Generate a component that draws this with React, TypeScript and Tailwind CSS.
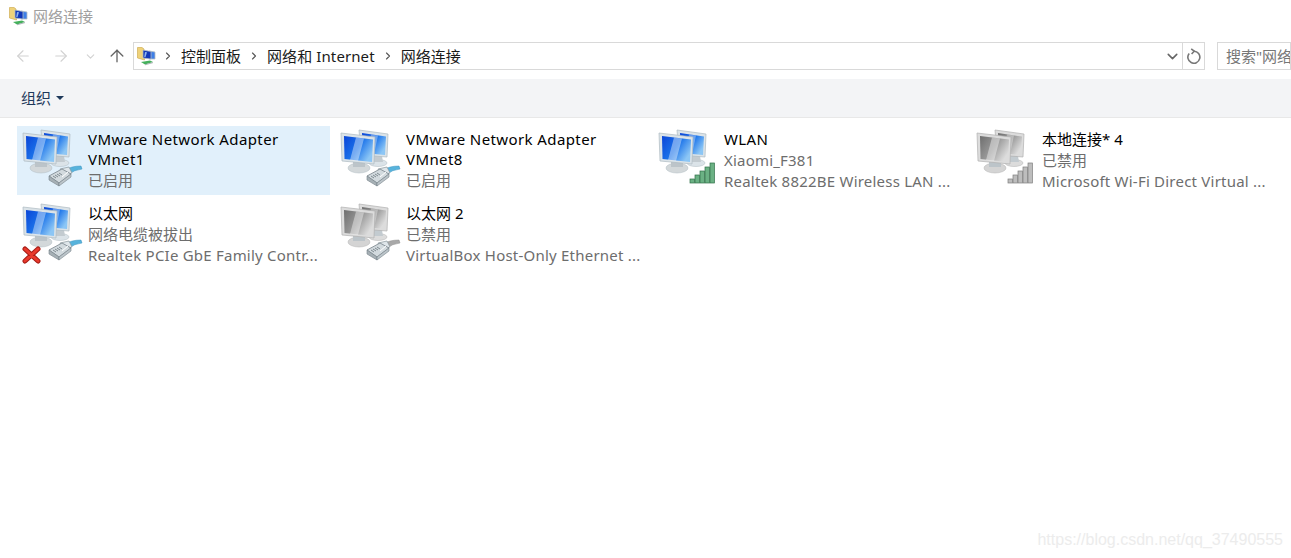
import { ArrowLeft, ArrowRight, ArrowUp, ChevronDown, ChevronRight } from "lucide-react";

const FONT = "font-['Noto_Sans','Noto_Sans_CJK_SC',sans-serif]";

type Badge = "plug" | "signal" | "signalOff";

const Plug = ({ gray }: { gray?: boolean }) => (
  <g>
    <path d="M47 44 Q52 40 62 40 L63 43 Q55 44 50 48 Z" fill={gray ? "#a8a8a8" : "#57b3dc"} stroke={gray ? "#8c8c8c" : "#3b93bf"} strokeWidth="0.5" />
    <polygon points="41,43 50,41 53,47 44,50" fill="#dfe6ea" stroke="#8a969c" strokeWidth="0.7" />
    <polygon points="30,50 43,43 52,48 40,57" fill="#d2dade" stroke="#77838a" strokeWidth="0.8" />
    <polygon points="30,50 40,57 40,60 30,54" fill="#a6b0b5" stroke="#77838a" strokeWidth="0.6" />
    <polygon points="40,57 52,48 52,51 40,60" fill="#bdc6cb" stroke="#77838a" strokeWidth="0.6" />
    <path d="M34 50 L37 52 M36 49 L39 51 M38 48 L41 50 M40 47 L43 49" stroke="#6a767c" strokeWidth="0.8" />
    <path d="M43 51 L49 46" stroke="#ffffff" strokeWidth="1" />
  </g>
);

const Signal = ({ gray }: { gray?: boolean }) => {
  const fill = gray ? "#bdbdbd" : "#6bb184";
  const edge = gray ? "#7e7e7e" : "#2f6f47";
  const bars = [
    { x: 35, y: 53, h: 4 },
    { x: 40, y: 49, h: 8 },
    { x: 45, y: 45, h: 12 },
    { x: 50, y: 41, h: 16 },
    { x: 55, y: 37, h: 20 },
  ];
  return (
    <g>
      {bars.map((b) => (
        <rect key={b.x} x={b.x} y={b.y} width="4.4" height={b.h} fill={fill} stroke={edge} strokeWidth="0.7" />
      ))}
    </g>
  );
};

const NetworkIcon = ({ gray, badge, unplugged }: { gray?: boolean; badge: Badge; unplugged?: boolean }) => {
  const frame = gray ? "#dcdcdc" : "#dbe3e8";
  const edge = gray ? "#b0b0b0" : "#aebac1";
  const screen = gray ? "url(#screenGray)" : "url(#screenBlue)";
  return (
    <svg width="66" height="66" viewBox="0 0 66 66" className="shrink-0">
      <defs>
        <linearGradient id="screenBlue" x1="0" y1="0" x2="1" y2="0.6">
          <stop offset="0" stopColor="#0a45d8" />
          <stop offset="0.55" stopColor="#1c74ea" />
          <stop offset="1" stopColor="#8cc6f5" />
        </linearGradient>
        <linearGradient id="screenGray" x1="0" y1="0" x2="1" y2="0.6">
          <stop offset="0" stopColor="#6e6e6e" />
          <stop offset="0.55" stopColor="#9a9a9a" />
          <stop offset="1" stopColor="#dcdcdc" />
        </linearGradient>
      </defs>
      {/* back monitor */}
      <ellipse cx="41" cy="37" rx="9" ry="3.5" fill={frame} stroke={edge} strokeWidth="0.5" />
      <polygon points="36,29 45,30 46,36 36,36" fill="#c3cbd0" />
      <polygon points="22,4 51,8 50,31 24,29" fill={frame} stroke={edge} strokeWidth="0.7" />
      <polygon points="25,7 49,10.5 48,29 26,27" fill={screen} />
      <polygon points="34,8.5 41,9.5 37,28 30,27" fill="#ffffff" fillOpacity="0.35" />
      {/* front monitor */}
      <ellipse cx="22" cy="42" rx="11" ry="5" fill={gray ? "#d4d4d4" : "#d3d8da"} stroke={edge} strokeWidth="0.5" />
      <polygon points="16,34 28,35 28,41 16,41" fill="#bcc4c9" />
      <polygon points="4,7 38,11 37,38 5,35" fill={frame} stroke={edge} strokeWidth="0.7" />
      <polygon points="7,10 36,13.5 35,36 7.5,33" fill={screen} />
      <polygon points="19,11.5 27,12.5 21,35 13,34" fill="#ffffff" fillOpacity="0.4" />
      {badge === "plug" && <Plug gray={gray} />}
      {badge !== "plug" && <Signal gray={badge === "signalOff"} />}
      {unplugged && (
        <g>
          <path d="M6 49 L19 61 M19 49 L6 61" stroke="#a51b14" strokeWidth="5" strokeLinecap="round" />
          <path d="M6 49 L19 61 M19 49 L6 61" stroke="#e8392c" strokeWidth="3" strokeLinecap="round" />
        </g>
      )}
    </svg>
  );
};

const FolderIcon = () => (
  <svg width="19" height="19" viewBox="0 0 19 19" className="shrink-0">
    <path d="M0.5 0.5 L5 0.5 L7 2 L7.5 13 L0.5 11 Z" fill="#efd27a" stroke="#c9a443" strokeWidth="0.6" />
    <polygon points="12,4 18,5 18,12 12,12" fill="#3f7fe6" stroke="#b4bec4" strokeWidth="0.8" />
    <polygon points="6,3 14,4.5 14,12 6,11" fill="#1238b8" stroke="#b4bec4" strokeWidth="0.8" />
    <polygon points="8,5 10,5.3 8.5,10 7.2,10" fill="#8fb4ee" />
    <path d="M4 15 L13 13.5 L16 15 L8 17.5 Z" fill="#45b05c" />
    <path d="M8 17.8 L16 15.6" stroke="#9aa3a8" strokeWidth="0.8" />
  </svg>
);

const RefreshIcon = () => (
  <svg width="16" height="16" viewBox="0 0 16 16" fill="none" stroke="#777" strokeWidth="1.6">
    <path d="M8 3.2 A6 6 0 1 1 3.2 5.4" />
    <path d="M5.2 0.8 L8.2 3.2 L5.6 6" />
  </svg>
);

const connections: { name: string[]; latin?: boolean; status: string; device: string; gray?: boolean; badge: Badge; unplugged?: boolean; selected?: boolean }[] = [
  { name: ["VMware Network Adapter", "VMnet1"], latin: true, status: "已启用", device: "", badge: "plug", selected: true },
  { name: ["VMware Network Adapter", "VMnet8"], latin: true, status: "已启用", device: "", badge: "plug" },
  { name: ["WLAN"], latin: true, status: "Xiaomi_F381", device: "Realtek 8822BE Wireless LAN ...", badge: "signal" },
  { name: ["本地连接* 4"], status: "已禁用", device: "Microsoft Wi-Fi Direct Virtual ...", gray: true, badge: "signalOff" },
  { name: ["以太网"], status: "网络电缆被拔出", device: "Realtek PCIe GbE Family Contr...", badge: "plug", unplugged: true },
  { name: ["以太网 2"], status: "已禁用", device: "VirtualBox Host-Only Ethernet ...", gray: true, badge: "plug" },
];

const Crumb = ({ label, wide }: { label: string; wide?: boolean }) => (
  <>
    <ChevronRight size={12} strokeWidth={2.2} className="shrink-0 text-[#555]" />
    <span className={`pb-px text-[15px] leading-5 text-[#1a1a1a] ${wide ? "tracking-[0.1px]" : ""}`}>{label}</span>
  </>
);

export default function App() {
  return (
    <div className={`relative h-[558px] w-[1291px] overflow-hidden bg-white ${FONT}`}>
      {/* --- Title bar --- */}
      <div className="flex h-[33px] items-center gap-[5px] pl-[9px]">
        <FolderIcon />
        <span className="text-[15px] text-[#a0a0a0]">网络连接</span>
      </div>

      {/* --- Address row --- */}
      <div className="flex h-[46px] items-center">
        <div className="flex w-[133px] items-center pl-[14px] text-[#d2d2d2]">
          <ArrowLeft size={18} strokeWidth={1.5} />
          <ArrowRight size={18} strokeWidth={1.5} className="ml-[20px]" />
          <ChevronDown size={13} strokeWidth={2} className="ml-[14px]" />
          <ArrowUp size={20} strokeWidth={1.6} className="ml-[10px] text-[#666]" />
        </div>
        <div className="flex h-7 w-[1050px] items-center border border-[#d9d9d9] pl-[3px] pr-[1px]">
          <FolderIcon />
          <div className="ml-[6px] flex items-center gap-[7px]">
            <Crumb label="控制面板" />
            <Crumb label="网络和 Internet" wide />
            <Crumb label="网络连接" />
          </div>
          <ChevronDown size={17} strokeWidth={2.2} className="ml-auto text-[#666]" />
        </div>
        <div className="flex h-7 w-[22px] items-center justify-center border border-l-0 border-[#d9d9d9]">
          <RefreshIcon />
        </div>
        <div className="ml-3 flex h-7 flex-1 items-center overflow-hidden whitespace-nowrap border border-[#d9d9d9] pl-[8px] text-[15px] text-[#777]">
          搜索"网络连接"
        </div>
      </div>

      {/* --- Toolbar --- */}
      <div className="flex h-[39px] items-center border-b border-[#e8e8e8] bg-[#f3f4f6] pl-[21px]">
        <span className="text-[15px] text-[#1e395b]">组织</span>
        <span className="ml-[5px] h-0 w-0 border-x-[4px] border-t-[4px] border-x-transparent border-t-[#1e395b]" />
      </div>

      {/* --- Connections --- */}
      <div className="grid grid-cols-[repeat(4,318px)] pl-[17px] pt-2">
        {connections.map((c, i) => (
          <div
            key={c.name.join() + i}
            className={`flex ${i < 4 ? "h-[69px]" : "h-[74px] pt-[5px]"} w-[313px] ${c.selected ? "bg-[#e1f0fb]" : ""}`}
          >
            <div className="ml-[2px]">
              <NetworkIcon gray={c.gray} badge={c.badge} unplugged={c.unplugged} />
            </div>
            <div className="ml-[3px] min-w-0 pt-[3px] text-[15px] leading-[21px] whitespace-nowrap">
              {c.name.map((line, n) => (
                <div
                  key={line}
                  className={`text-black ${c.latin ? "tracking-[0.4px]" : ""} ${n === 0 && c.name.length > 1 ? "leading-[20px]" : ""}`}
                >
                  {line}
                </div>
              ))}
              <div className={`text-[#6d6d6d] ${c.name[0] === "WLAN" ? "tracking-[0.2px]" : ""}`}>{c.status}</div>
              {c.device && <div className="text-[#6d6d6d] tracking-[0.22px]">{c.device}</div>}
            </div>
          </div>
        ))}
      </div>

      {/* --- Watermark --- */}
      <div className="absolute bottom-2 right-[8px] font-['Liberation_Sans',sans-serif] text-[16px] leading-5 text-[#ececec]">
        https://blog.csdn.net/qq_37490555
      </div>
    </div>
  );
}
